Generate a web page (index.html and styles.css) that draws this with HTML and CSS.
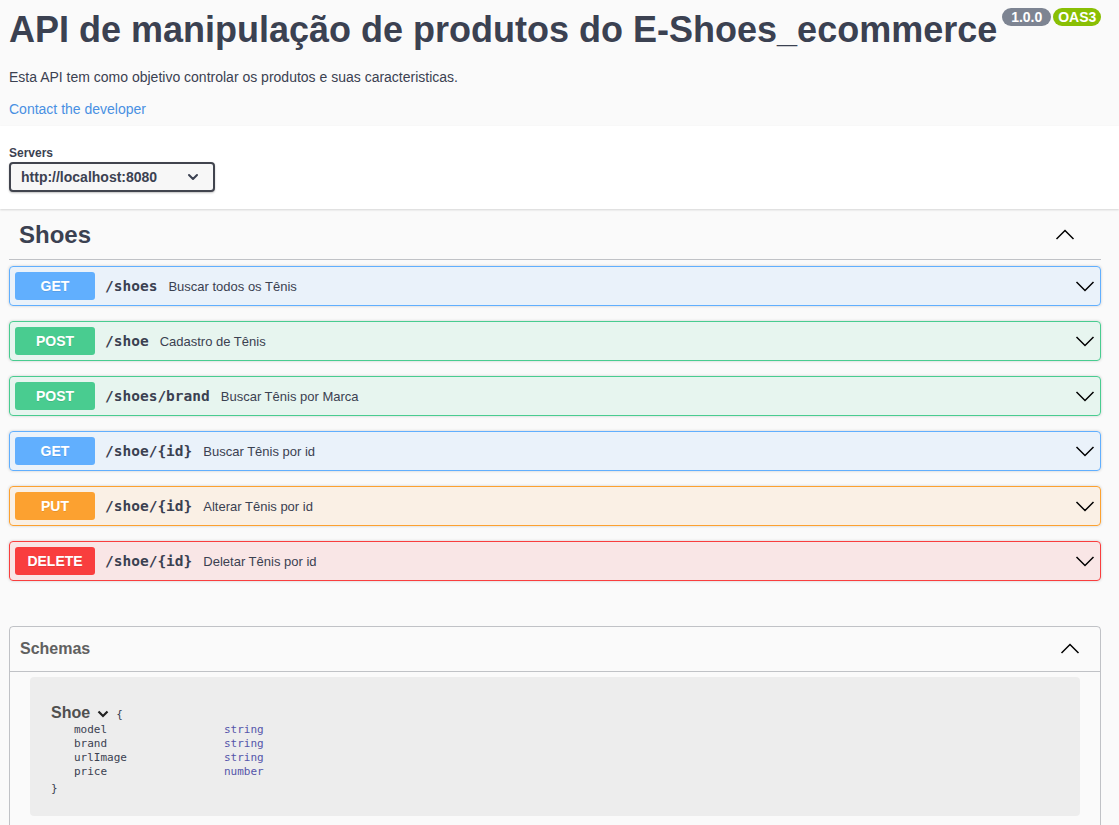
FILE: index.html
```html
<!DOCTYPE html>
<html lang="pt">
<head>
<meta charset="utf-8">
<title>Swagger UI</title>
<link rel="stylesheet" href="styles.css">
</head>
<body>
<div class="info">
  <div class="title-row">
    <h2 class="title">API de manipulação de produtos do E-Shoes_ecommerce</h2>
    <div class="badges">
      <small class="badge ver"> 1.0.0 </small>
      <small class="badge oas">OAS3</small>
    </div>
  </div>
  <p class="desc">Esta API tem como objetivo controlar os produtos e suas caracteristicas.</p>
  <a class="contact" href="#">Contact the developer</a>
</div>

<div class="scheme">
  <span class="servers-title">Servers</span>
  <div class="select">
    <span>http://localhost:8080</span>
    <svg class="sel-arrow" width="20" height="20" viewBox="0 0 20 20"><polyline points="6,8 10,12 14,8" fill="none" stroke="#3b4151" stroke-width="2" stroke-linecap="round" stroke-linejoin="round"/></svg>
  </div>
</div>

<div class="main">
  <div class="tag">
    <h3>Shoes</h3>
    <svg width="20" height="20" viewBox="0 0 20 20"><polyline points="1.5,14 10,5.5 18.5,14" fill="none" stroke="#000" stroke-width="1.5"/></svg>
  </div>

  <div class="op get">
    <span class="method">GET</span>
    <span class="path">/shoes</span>
    <span class="summary">Buscar todos os Tênis</span>
    <svg class="arrow" width="20" height="20" viewBox="0 0 20 20"><polyline points="1.5,6 10,14.5 18.5,6" fill="none" stroke="#000" stroke-width="1.5"/></svg>
  </div>
  <div class="op post">
    <span class="method">POST</span>
    <span class="path">/shoe</span>
    <span class="summary">Cadastro de Tênis</span>
    <svg class="arrow" width="20" height="20" viewBox="0 0 20 20"><polyline points="1.5,6 10,14.5 18.5,6" fill="none" stroke="#000" stroke-width="1.5"/></svg>
  </div>
  <div class="op post">
    <span class="method">POST</span>
    <span class="path">/shoes/brand</span>
    <span class="summary">Buscar Tênis por Marca</span>
    <svg class="arrow" width="20" height="20" viewBox="0 0 20 20"><polyline points="1.5,6 10,14.5 18.5,6" fill="none" stroke="#000" stroke-width="1.5"/></svg>
  </div>
  <div class="op get">
    <span class="method">GET</span>
    <span class="path">/shoe/{id}</span>
    <span class="summary">Buscar Tênis por id</span>
    <svg class="arrow" width="20" height="20" viewBox="0 0 20 20"><polyline points="1.5,6 10,14.5 18.5,6" fill="none" stroke="#000" stroke-width="1.5"/></svg>
  </div>
  <div class="op put">
    <span class="method">PUT</span>
    <span class="path">/shoe/{id}</span>
    <span class="summary">Alterar Tênis por id</span>
    <svg class="arrow" width="20" height="20" viewBox="0 0 20 20"><polyline points="1.5,6 10,14.5 18.5,6" fill="none" stroke="#000" stroke-width="1.5"/></svg>
  </div>
  <div class="op delete">
    <span class="method">DELETE</span>
    <span class="path">/shoe/{id}</span>
    <span class="summary">Deletar Tênis por id</span>
    <svg class="arrow" width="20" height="20" viewBox="0 0 20 20"><polyline points="1.5,6 10,14.5 18.5,6" fill="none" stroke="#000" stroke-width="1.5"/></svg>
  </div>

  <section class="models">
    <div class="models-head">
      <h4>Schemas</h4>
      <svg width="20" height="20" viewBox="0 0 20 20"><polyline points="1.5,14 10,5.5 18.5,14" fill="none" stroke="#000" stroke-width="1.5"/></svg>
    </div>
    <div class="model-container">
      <div class="model-title">
        <span class="model-name">Shoe</span>
        <svg class="model-toggle" width="12" height="8" viewBox="0 0 12 8"><polyline points="1.5,1.5 6,6 10.5,1.5" fill="none" stroke="#222" stroke-width="2.2"/></svg>
        <span class="brace">{</span>
      </div>
      <div class="props">
        <span class="pname">model</span><span class="ptype">string</span>
        <span class="pname">brand</span><span class="ptype">string</span>
        <span class="pname">urlImage</span><span class="ptype">string</span>
        <span class="pname">price</span><span class="ptype">number</span>
      </div>
      <div class="brace close">}</div>
    </div>
  </section>
</div>
</body>
</html>
```

FILE: styles.css
```css
* { box-sizing: border-box; }

body {
  margin: 0;
  background: #fafafa;
  font-family: "Liberation Sans", Arial, sans-serif;
  color: #3b4151;
}

.info {
  padding: 0 18px 9px 9px;
  background: #fafafa;
}

.title-row {
  display: flex;
  align-items: flex-start;
}

.title {
  margin: 10px 0 0;
  font-size: 36px;
  line-height: 40px;
  font-weight: 700;
  color: #3b4151;
  white-space: nowrap;
}

.badges {
  flex: none;
  display: flex;
  gap: 2px;
  margin: 8px 0 0 5px;
}

.badge {
  display: inline-block;
  height: 18px;
  line-height: 18px;
  padding: 0 5px;
  border-radius: 57px;
  font-size: 14px;
  font-weight: 700;
  color: #fff;
  white-space: pre;
}

.ver { background: #7d8492; }
.oas { background: #89bf04; }

.desc {
  margin: 19px 0 0;
  font-size: 14px;
  line-height: 16px;
}

.contact {
  display: block;
  margin-top: 16px;
  font-size: 14px;
  line-height: 16px;
  color: #4990e2;
  text-decoration: none;
}

.scheme {
  background: #fff;
  box-shadow: 0 1px 2px 0 rgba(0, 0, 0, .15);
  padding: 20px 9px 17px;
  position: relative;
}

.servers-title {
  display: block;
  font-size: 12px;
  line-height: 14px;
  font-weight: 700;
  margin-bottom: 2px;
}

.select {
  display: flex;
  align-items: center;
  justify-content: space-between;
  width: 206px;
  height: 30px;
  padding: 0 10px;
  border: 2px solid #41444e;
  border-radius: 4px;
  background: #f7f7f7;
  box-shadow: 0 1px 2px 0 rgba(0, 0, 0, .25);
  font-size: 14px;
  font-weight: 700;
  color: #3b4151;
}

.main {
  display: flex;
  flex-direction: column;
  padding: 0 18px 0 9px;
}

.tag {
  display: flex;
  align-items: center;
  justify-content: space-between;
  padding: 11px 26px 9px 10px;
  border-bottom: 1px solid rgba(59, 65, 81, .3);
  margin-bottom: 6px;
}

.tag h3 {
  margin: 0;
  font-size: 24px;
  line-height: 30px;
  font-weight: 700;
  color: #3b4151;
}

.op {
  display: flex;
  align-items: center;
  padding: 5px;
  border: 1px solid;
  border-radius: 4px;
  box-shadow: 0 0 3px rgba(0, 0, 0, .19);
  margin-bottom: 15px;
}

.method {
  width: 80px;
  flex: none;
  padding: 6px 0;
  border-radius: 3px;
  text-align: center;
  font-size: 14px;
  line-height: 16px;
  font-weight: 700;
  color: #fff;
  text-shadow: 0 1px 0 rgba(0, 0, 0, .1);
}

.path {
  padding: 0 11px 0 10px;
  font-family: "DejaVu Sans Mono", "Liberation Mono", monospace;
  font-size: 14.5px;
  font-weight: 700;
  color: #3b4151;
}

.summary {
  flex: 1;
  font-size: 13px;
  color: #3b4151;
}

.arrow { flex: none; }

.get { border-color: #61affe; background: rgba(97, 175, 254, .1); }
.get .method { background: #61affe; }
.post { border-color: #49cc90; background: rgba(73, 204, 144, .1); }
.post .method { background: #49cc90; }
.put { border-color: #fca130; background: rgba(252, 161, 48, .1); }
.put .method { background: #fca130; }
.delete { border-color: #f93e3e; background: rgba(249, 62, 62, .1); }
.delete .method { background: #f93e3e; }

.models {
  margin-top: 30px;
  border: 1px solid rgba(59, 65, 81, .3);
  border-radius: 4px;
}

.models-head {
  display: flex;
  align-items: center;
  justify-content: space-between;
  padding: 10px 20px 10px 10px;
  border-bottom: 1px solid rgba(59, 65, 81, .3);
}

.models-head h4 {
  margin: 0;
  font-size: 16px;
  line-height: 24px;
  font-weight: 700;
  color: #606060;
}

.model-container {
  margin: 5px 20px 15px;
  padding: 26px 21px 20px;
  border-radius: 4px;
  background: rgba(0, 0, 0, .05);
}

.model-title {
  display: flex;
  align-items: center;
  height: 19px;
}

.model-name {
  font-size: 16px;
  line-height: 19px;
  font-weight: 700;
  color: #505050;
}

.model-toggle {
  margin: 3px 0 0 7px;
}

.brace {
  font-family: "DejaVu Sans Mono", "Liberation Mono", monospace;
  font-size: 11px;
  color: #3b4151;
}

.model-title .brace {
  margin: 3px 0 0 7px;
}

.props {
  display: grid;
  grid-template-columns: 150px auto;
  justify-content: start;
  padding-left: 23px;
  margin-top: 1px;
  font-family: "DejaVu Sans Mono", "Liberation Mono", monospace;
  font-size: 11px;
  line-height: 14px;
}

.pname { color: #3b4151; }
.ptype { color: #55a; }

.brace.close {
  margin-top: 3px;
  line-height: 14px;
}
```
